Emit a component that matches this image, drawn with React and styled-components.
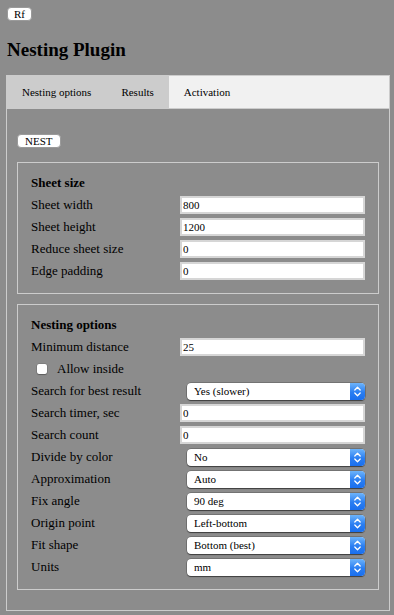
import React from "react";
import styled, { createGlobalStyle } from "styled-components";

const GlobalStyle = createGlobalStyle`
  html, body {
    margin: 0;
    padding: 0;
    background: #8c8c8c;
    font-family: "Liberation Serif", "Times New Roman", serif;
    color: #000;
  }
`;

const Page = styled.div`
  padding: 7px 4px 0 6px;
`;

const SmallButton = styled.button`
  display: block;
  margin-left: ${(p) => p.$indent || 0}px;
  height: 14px;
  padding: 0 ${(p) => p.$pad || 6}px;
  font-family: "Liberation Serif", serif;
  font-size: 11px;
  font-weight: normal;
  line-height: 12px;
  color: #000;
  background: #fff;
  border: 1px solid #9a9a9a;
  border-radius: 4px;
  box-sizing: border-box;
`;

const Title = styled.h3`
  margin: 18px 0 14px 1px;
  font-size: 19px;
  line-height: 22px;
  font-weight: bold;
`;

const TabBar = styled.div`
  display: flex;
  height: 34px;
  box-sizing: border-box;
  border: 1px solid #cccccc;
  background: #f1f1f1;
`;

const Tab = styled.div`
  display: flex;
  align-items: center;
  padding: 0 15px;
  font-size: 11px;
  background: ${(p) => (p.$active ? "#cccccc" : "transparent")};
`;

const TabContent = styled.div`
  border: 1px solid #cccccc;
  border-top: none;
  padding: 25px 10px 20px;
`;

const Fieldset = styled.fieldset`
  margin: ${(p) => (p.$first ? "14px" : "10px")} 0 0;
  padding: 9px 13px 11px;
  border: 1px solid #cccccc;
  min-width: 0;
`;

const Grid = styled.div`
  display: grid;
  grid-template-columns: 149px 1fr;
  grid-auto-rows: 22px;
  align-items: center;
`;

const SectionTitle = styled.div`
  grid-column: 1 / -1;
  font-size: 13px;
  font-weight: bold;
  line-height: 22px;
`;

const Label = styled.label`
  font-size: 13px;
  line-height: 22px;
  white-space: nowrap;
`;

const TextInput = styled.input`
  box-sizing: border-box;
  width: 100%;
  height: 18px;
  margin: 0;
  padding: 0 1px;
  border: 2px solid #d6d6d6;
  background: #fff;
  font-family: "Liberation Serif", serif;
  font-size: 11px;
  font-weight: normal;
  color: #000;
  outline: none;
`;

const CheckRow = styled.label`
  grid-column: 1 / -1;
  display: flex;
  align-items: center;
  gap: 10px;
  padding-left: 6px;
  font-size: 13px;
`;

const CheckBox = styled.span`
  width: 10px;
  height: 10px;
  background: #fff;
  border-radius: 2px;
  box-shadow: 0 0 0 0.5px rgba(0, 0, 0, 0.2), 0 1px 1px rgba(0, 0, 0, 0.25);
`;

const SelectBox = styled.div`
  display: flex;
  height: 17px;
  margin-left: 7px;
  background: #fff;
  border-radius: 4px;
  overflow: hidden;
  box-shadow: 0 0 0 0.5px rgba(0, 0, 0, 0.35), 0 1px 1px rgba(0, 0, 0, 0.45);
`;

const Select = styled.select`
  flex: 1;
  min-width: 0;
  appearance: none;
  -webkit-appearance: none;
  border: none;
  background: transparent;
  margin: 0;
  padding: 0 0 0 7px;
  height: 17px;
  font-family: "Liberation Serif", serif;
  font-size: 11px;
  font-weight: normal;
  color: #000;
  outline: none;
`;

const Stepper = styled.span`
  width: 15px;
  display: flex;
  align-items: center;
  justify-content: center;
  background: linear-gradient(#6db4fb, #2a7ef2 55%, #1a6fee);
`;

const Chevrons = () => (
  <svg width="15" height="17" viewBox="0 0 15 17">
    <path d="M4.8 7 L7.5 4.3 L10.2 7" fill="none" stroke="#fff" strokeWidth="1.3" strokeLinecap="round" strokeLinejoin="round" />
    <path d="M4.8 10 L7.5 12.7 L10.2 10" fill="none" stroke="#fff" strokeWidth="1.3" strokeLinecap="round" strokeLinejoin="round" />
  </svg>
);

const InputRow = ({ label, value }) => (
  <>
    <Label>{label}</Label>
    <TextInput type="text" defaultValue={value} />
  </>
);

const SelectRow = ({ label, value }) => (
  <>
    <Label>{label}</Label>
    <SelectBox>
      <Select defaultValue={value}>
        <option value={value}>{value}</option>
      </Select>
      <Stepper>
        <Chevrons />
      </Stepper>
    </SelectBox>
  </>
);

export default function App() {
  return (
    <>
      <GlobalStyle />
      <Page>
        <SmallButton $indent={1}>Rf</SmallButton>
        <Title>Nesting Plugin</Title>
        <TabBar>
          <Tab $active>Nesting options</Tab>
          <Tab $active>Results</Tab>
          <Tab>Activation</Tab>
        </TabBar>
        <TabContent>
          <SmallButton $pad={7}>NEST</SmallButton>
          <Fieldset $first>
            <Grid>
              <SectionTitle>Sheet size</SectionTitle>
              <InputRow label="Sheet width" value="800" />
              <InputRow label="Sheet height" value="1200" />
              <InputRow label="Reduce sheet size" value="0" />
              <InputRow label="Edge padding" value="0" />
            </Grid>
          </Fieldset>
          <Fieldset>
            <Grid>
              <SectionTitle>Nesting options</SectionTitle>
              <InputRow label="Minimum distance" value="25" />
              <CheckRow>
                <CheckBox />
                Allow inside
              </CheckRow>
              <SelectRow label="Search for best result" value="Yes (slower)" />
              <InputRow label="Search timer, sec" value="0" />
              <InputRow label="Search count" value="0" />
              <SelectRow label="Divide by color" value="No" />
              <SelectRow label="Approximation" value="Auto" />
              <SelectRow label="Fix angle" value="90 deg" />
              <SelectRow label="Origin point" value="Left-bottom" />
              <SelectRow label="Fit shape" value="Bottom (best)" />
              <SelectRow label="Units" value="mm" />
            </Grid>
          </Fieldset>
        </TabContent>
      </Page>
    </>
  );
}
